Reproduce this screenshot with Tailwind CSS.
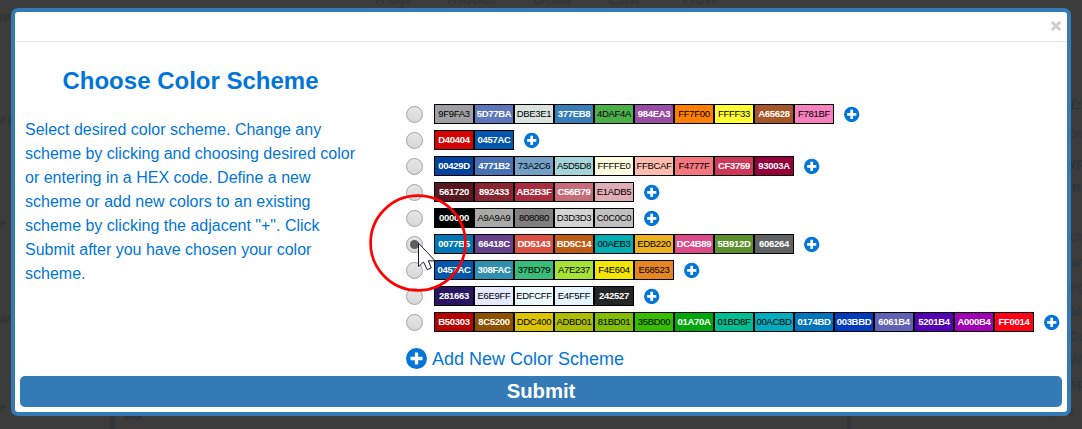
<!DOCTYPE html>
<html lang="en">
<head>
<meta charset="utf-8">
<title>Choose Color Scheme</title>
<script src="https://cdn.jsdelivr.net/npm/@tailwindcss/browser@4"></script>
</head>
<body class="relative h-[429px] w-[1082px] overflow-hidden bg-[#3c3c3c] px-[11px] pt-2 font-['Liberation_Sans',Arial,sans-serif]">
  <!-- dimmed page behind the dialog -->
  <div class="absolute inset-0 overflow-hidden text-[#30343a]" aria-hidden="true">
    <span class="absolute left-[375px] -top-[14px] text-[18px] leading-6">Map</span>
    <span class="absolute left-[447px] -top-[14px] text-[18px] leading-6">Model</span>
    <span class="absolute left-[533px] -top-[14px] text-[18px] leading-6">Data</span>
    <span class="absolute left-[608px] -top-[14px] text-[18px] leading-6">Edit</span>
    <span class="absolute left-[679px] -top-[14px] text-[18px] leading-6">View</span>
    <span class="absolute left-0 top-[9px] text-[10px] italic text-[#2f2f2f]">sp</span>
    <span class="absolute -left-[2px] top-[112px] text-[10px] italic text-[#2f2f2f]">vi p</span>
    <span class="absolute left-0 top-[216px] text-[10px] text-[#2f2f2f]">e</span>
    <span class="absolute left-0 top-[311px] text-[10px] text-[#2f2f2f]">az</span>
    <span class="absolute left-0 top-[400px] text-[10px] text-[#2f2f2f]">e</span>
    <span class="absolute left-[1071px] top-[92px] text-[14px] font-bold italic underline">r-</span>
    <span class="absolute left-[1069px] top-[124px] text-[13px]">ork</span>
    <span class="absolute left-[1069px] top-[153px] text-[13px] font-bold">yp</span>
    <span class="absolute left-[1072px] top-[178px] text-[13px] font-bold">tt</span>
    <span class="absolute left-[1070px] top-[227px] text-[13px]">ch</span>
    <span class="absolute left-[1071px] top-[252px] text-[13px]">ar</span>
    <span class="absolute left-[1070px] top-[277px] text-[13px]">eg</span>
    <span class="absolute left-[1071px] top-[302px] text-[13px]">lo</span>
    <span class="absolute left-[1069px] top-[327px] text-[13px]">Co</span>
    <span class="absolute left-[1069px] top-[350px] text-[13px]">Wo</span>
    <span class="absolute left-[1070px] top-[374px] text-[13px] font-bold">sp</span>
    <span class="absolute left-[1051px] top-[401px] text-[13px] font-bold">pes</span>
    <span class="absolute left-[124px] top-[402px] text-[16px] font-bold text-[#2f3338]">88</span>
    <span class="absolute left-[110px] top-[414px] h-4 w-[5px] bg-[#333639]"></span>
    <span class="absolute left-[847px] top-[416px] h-4 w-1 bg-[#333639]"></span>
  </div>

  <main class="relative flex h-[408px] w-[1060px] flex-col rounded-[7px] border-4 border-[#337ab7] bg-white text-[#0275d8]">
    <header class="flex h-[30px] shrink-0 items-center justify-end border-b border-[#e5e5e5] pr-[6px] pb-[2px]">
      <button aria-label="Close"><svg class="block h-[10px] w-[10px]" viewBox="0 0 10 10"><path d="M.8 .8L9.2 9.2M9.2 .8L.8 9.2" stroke="#ccc" stroke-width="2.7"/></svg></button>
    </header>

    <div class="flex h-[334px] shrink-0">
      <section class="w-[391px] pl-[10px] pt-[22px]">
        <h1 class="w-[331px] text-center text-[24px] leading-[34px] font-bold">Choose Color Scheme</h1>
        <p class="mt-[20px] text-[16px] leading-6 whitespace-nowrap">Select desired color scheme. Change any<br>scheme by clicking and choosing desired color<br>or entering in a HEX code. Define a new<br>scheme or add new colors to an existing<br>scheme by clicking the adjacent "+". Click<br>Submit after you have chosen your color<br>scheme.</p>
      </section>
      <section class="pt-[59px]">
        <div id="schemes"></div>
        <div class="mt-3 flex h-[22px] items-center gap-[5px]">
          <svg class="h-[21px] w-[21px]" viewBox="0 0 16 16"><circle cx="8" cy="8" r="8" fill="#0275d8"/><path d="M8 3.4V12.6M3.4 8H12.6" stroke="#fff" stroke-width="2.5"/></svg>
          <a class="pt-px text-[18px] leading-[22px]">Add New Color Scheme</a>
        </div>
      </section>
    </div>

    <button class="mx-[5px] h-[31px] shrink-0 rounded-[5px] bg-[#337ab7] text-[20.3px] leading-[31px] font-bold text-white">Submit</button>
  </main>

  <svg class="absolute left-[366px] top-[191px] h-[104px] w-[104px]" viewBox="366 191 104 104" fill="none">
    <circle cx="418" cy="243" r="47.4" stroke="#f00" stroke-width="2.7"/>
    <path d="M418.5 243.2V266.5L423.5 262L427.3 269.6L431.3 268L428.3 260.8H435.2Z" fill="#fff" stroke="#1a1a2a"/>
  </svg>

  <script>
    // "*" marks a swatch whose label is white
    const schemes = [
      '9F9FA3 5D77BA* DBE3E1 377EB8* 4DAF4A 984EA3* FF7F00 FFFF33 A65628* F781BF',
      'D40404* 0457AC*',
      '00429D* 4771B2* 73A2C6 A5D5D8 FFFFE0 FFBCAF F4777F CF3759* 93003A*',
      '561720* 892433* AB2B3F* C56B79* E1ADB5',
      '000000* A9A9A9 808080 D3D3D3 C0C0C0',
      '0077B5* 66418C* DD5143* BD5C14* 00AEB3 EDB220 DC4B89* 5B912D* 606264*',
      '0457AC* 308FAC* 37BD79 A7E237 F4E604 E68523',
      '281663* E6E9FF EDFCFF E4F5FF 242527*',
      'B50303* 8C5200* DDC400 ADBD01 81BD01 35BD00 01A70A* 01BD8F 00ACBD 0174BD* 003BBD* 6061B4* 5201B4* A000B4* FF0014*'
    ];
    document.getElementById('schemes').innerHTML = schemes.map((s, i) => `
      <div class="flex h-[26px] items-center">
        <span role="radio" class="mr-[11px] flex h-[17px] w-[17px] items-center justify-center rounded-full border border-[#a3a3a3] bg-linear-to-b from-[#e6e6e6] to-[#d8d8d8]">${i === 5 ? '<i class="h-[9px] w-[9px] rounded-full bg-[#5e5e5e]"></i>' : ''}</span>
        ${s.split(' ').map(c => `<span class="h-5 w-10 border border-black text-center text-[9.5px] leading-[18px] tracking-[-0.3px] ${c.endsWith('*') ? 'text-white font-bold' : 'text-black'}" style="background:#${c.slice(0, 6)}">${c.slice(0, 6)}</span>`).join('')}
        <svg class="ml-[10px] h-[16px] w-[16px]" viewBox="0 0 16 16"><circle cx="7.7" cy="8.4" r="7.7" fill="#0275d8"/><path d="M7.7 3.8V13M3.1 8.4H12.3" stroke="#fff" stroke-width="2.7"/></svg>
      </div>`).join('');
  </script>
</body>
</html>
